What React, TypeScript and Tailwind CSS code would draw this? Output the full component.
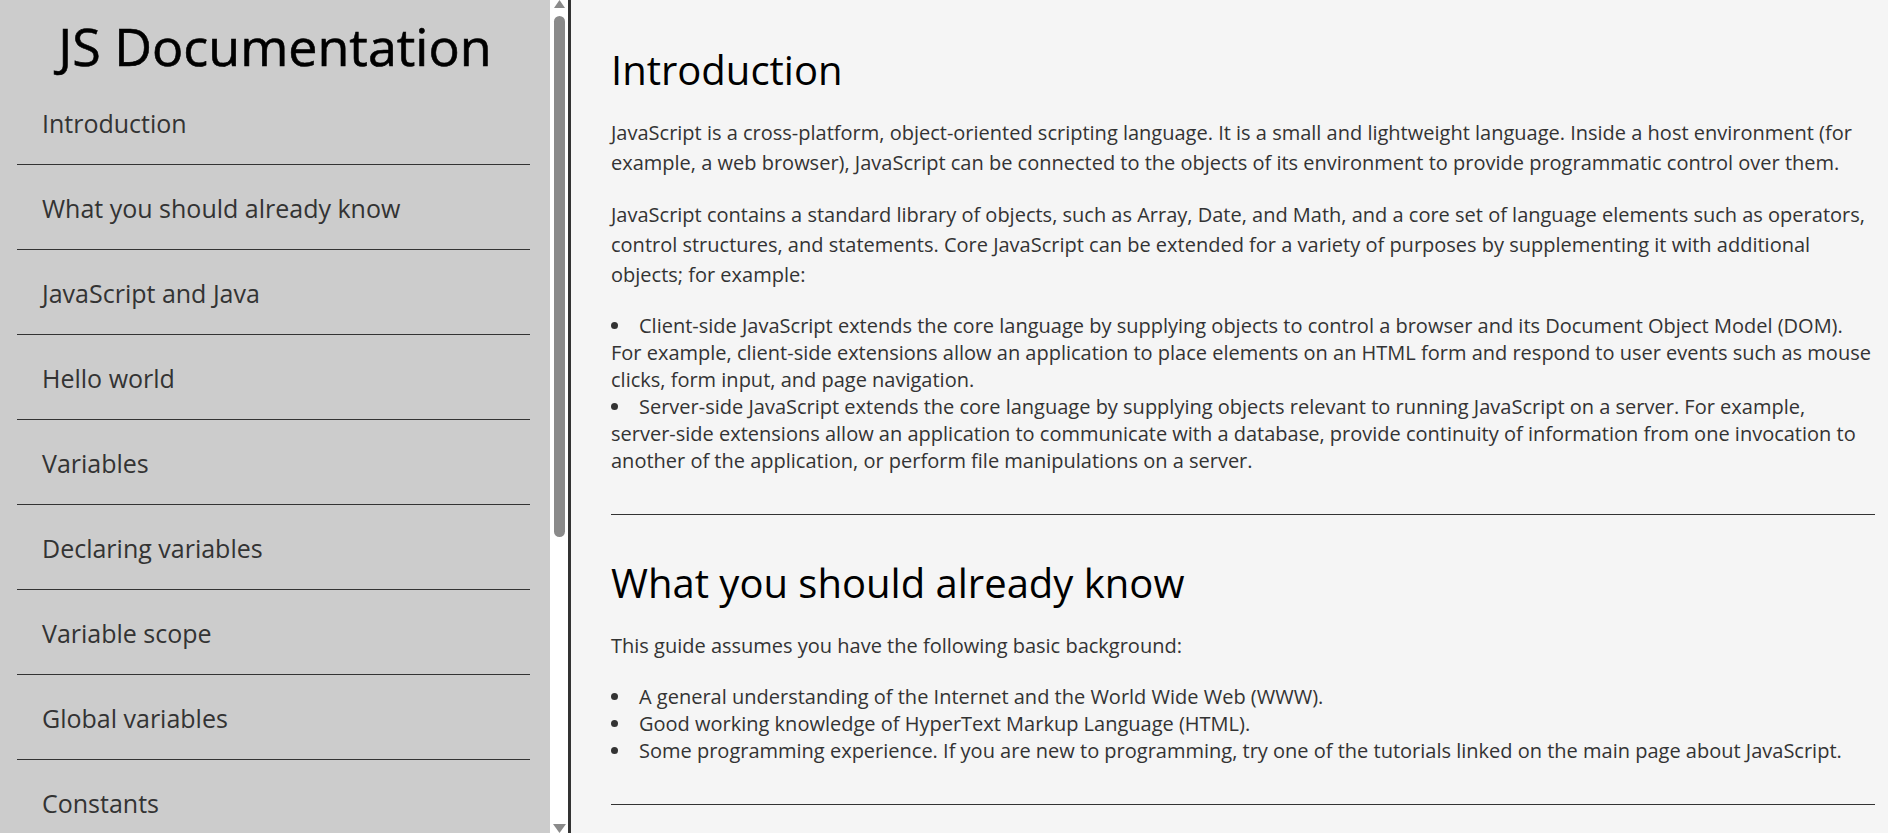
import React from "react";

const navItems = [
  "Introduction",
  "What you should already know",
  "JavaScript and Java",
  "Hello world",
  "Variables",
  "Declaring variables",
  "Variable scope",
  "Global variables",
  "Constants",
  "Data types",
  "if...else statement",
  "while statement",
  "Function declarations",
  "Reference",
];

function Section({ title, children }: { title: string; children: React.ReactNode }) {
  return (
    <section>
      <h2 className="text-[40px] leading-[normal] text-black mb-[21px]">{title}</h2>
      {children}
      <hr className="border-0 border-t border-[#333] mt-[40px] mb-[40px]" />
    </section>
  );
}

// drawn scrollbar for the sidebar (the headless browser hides native ones)
function ScrollBar() {
  return (
    <div className="w-[18px] h-full bg-white flex flex-col items-center">
      <svg width="11" height="8" viewBox="0 0 11 8" className="shrink-0">
        <polygon points="0,8 5.5,0 11,8" fill="#8a8a8a" />
      </svg>
      <div className="mt-[8px] w-[11px] h-[521px] rounded-full bg-[#8a8a8a] shrink-0" />
      <svg width="13" height="9" viewBox="0 0 13 9" className="mt-auto shrink-0">
        <polygon points="0,0 13,0 6.5,9" fill="#8a8a8a" />
      </svg>
    </div>
  );
}

export default function App() {
  return (
    <div className="flex h-screen overflow-hidden bg-[#f5f5f5] font-['Open_Sans',sans-serif]">
      <div className="flex shrink-0 h-full border-r-[3px] border-[#333]">
        <nav className="w-[550px] h-full overflow-hidden bg-[#ccc]">
          <header className="h-[80px] pt-[20px] text-center">
            <h1 className="text-[52px] leading-none font-normal text-black [-webkit-text-stroke:0.6px_black]">
              JS Documentation
            </h1>
          </header>
          <ul className="ml-[17px] mr-[20px]">
            {navItems.map((item) => (
              <li key={item} className="h-[85px] border-b border-[#333] pl-[25px] pt-[26px]">
                <a href="#" className="block text-[25px] leading-[normal] text-[#333]">
                  {item}
                </a>
              </li>
            ))}
          </ul>
        </nav>
        <ScrollBar />
      </div>

      <main className="flex-1 overflow-hidden pl-[40px] pr-[13px] pt-[42px] text-[20px] text-[#333]">
        <Section title="Introduction">
          <p className="leading-[30px] mb-[22px]">
            JavaScript is a cross-platform, object-oriented scripting language. It is a small and lightweight
            language. Inside a host environment (for example, a web browser), JavaScript can be connected to the
            objects of its environment to provide programmatic control over them.
          </p>
          <p className="leading-[30px] mb-[22px]">
            JavaScript contains a standard library of objects, such as Array, Date, and Math, and a core set of
            language elements such as operators, control structures, and statements. Core JavaScript can be extended
            for a variety of purposes by supplementing it with additional objects; for example:
          </p>
          <ul className="list-disc list-inside leading-[normal]">
            <li>
              Client-side JavaScript extends the core language by supplying objects to control a browser and its
              Document Object Model (DOM). For example, client-side extensions allow an application to place elements
              on an HTML form and respond to user events such as mouse clicks, form input, and page navigation.
            </li>
            <li>
              Server-side JavaScript extends the core language by supplying objects relevant to running JavaScript on
              a server. For example, server-side extensions allow an application to communicate with a database,
              provide continuity of information from one invocation to another of the application, or perform file
              manipulations on a server.
            </li>
          </ul>
        </Section>

        <Section title="What you should already know">
          <p className="leading-[30px] mb-[22px]">This guide assumes you have the following basic background:</p>
          <ul className="list-disc list-inside leading-[normal]">
            <li>A general understanding of the Internet and the World Wide Web (WWW).</li>
            <li>Good working knowledge of HyperText Markup Language (HTML).</li>
            <li>
              Some programming experience. If you are new to programming, try one of the tutorials linked on the main
              page about JavaScript.
            </li>
          </ul>
        </Section>

        <Section title="JavaScript and Java">
          <p className="leading-[30px] mb-[22px]">
            JavaScript and Java are similar in some ways but fundamentally different in some others. The JavaScript
            language resembles Java but does not have Java's static typing and strong type checking.
          </p>
        </Section>
      </main>
    </div>
  );
}
